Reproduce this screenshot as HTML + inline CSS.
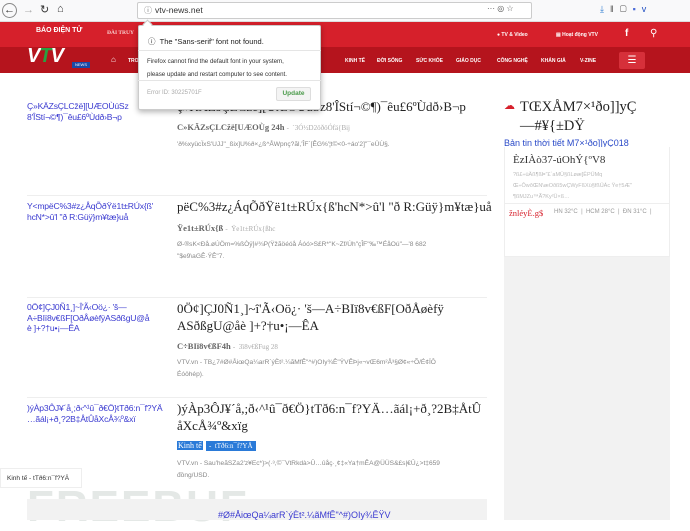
<!DOCTYPE html>
<html><head><meta charset="utf-8"><style>
*{margin:0;padding:0;box-sizing:border-box}
body{width:690px;height:520px;overflow:hidden;background:#fff;font-family:"Liberation Sans",sans-serif;position:relative}
.a{position:absolute;white-space:nowrap}
.ser{font-family:"Liberation Serif",serif}
.lk{color:#3a3ad0;font-size:8.6px;line-height:10.5px;letter-spacing:-0.2px}
.t{font-size:13px;color:#222;line-height:17px;font-family:"Liberation Serif",serif}
.m{font-size:8.5px;color:#666;font-weight:bold;font-family:"Liberation Serif",serif}
.m span{font-weight:normal;color:#aaa;font-size:7px}
.d{font-size:6.6px;color:#888;line-height:12px}
.hr{height:1px;background:#eee}
.nav{color:#fff;font-size:5px;font-weight:bold}
</style></head><body>
<div class="a" style="left:0;top:0;width:690px;height:22px;background:#f9f9fa;border-bottom:1px solid #ddd"></div>
<div class="a" style="left:2px;top:3px;width:15px;height:15px;border:1px solid #888;border-radius:50%;font-size:11px;line-height:12px;text-align:center;color:#333">←</div>
<div class="a" style="left:23px;top:4px;font-size:11px;color:#aaa">→</div>
<div class="a" style="left:40px;top:3px;font-size:11px;color:#333">↻</div>
<div class="a" style="left:57px;top:3px;font-size:11px;color:#333">⌂</div>
<div class="a" style="left:137px;top:2px;width:395px;height:17px;background:#fff;border:1px solid #ccc;border-radius:2px"></div>
<div class="a" style="left:144px;top:5px;font-size:8px;color:#777">ⓘ</div>
<div class="a" style="left:155px;top:5px;font-size:8.5px;color:#333">vtv-news.net</div>
<div class="a" style="left:487px;top:4px;font-size:8px;color:#555">··· ◎ ☆</div>
<div class="a" style="left:600px;top:4px;font-size:9px;color:#555;letter-spacing:6px"><span style="color:#2a7ad0">⤓</span>‖▢<span style="color:#4a6ad8">▪</span><span style="color:#1a4ac0">v</span></div>
<div class="a" style="left:0;top:22px;width:690px;height:25px;background:#d6202b"></div>
<div class="a" style="left:0;top:47px;width:690px;height:26px;background:#b5141d"></div>
<div class="a" style="left:36px;top:27px;font-size:7px;color:#fff;font-weight:bold">BÁO ĐIỆN TỬ</div>
<div class="a ser" style="left:107px;top:30px;font-size:5.5px;color:#f8d0d0;font-weight:bold">ĐÀI TRUY</div>
<div class="a" style="left:27px;top:45px;font-size:20px;font-weight:bold;font-style:italic;color:#fff;letter-spacing:-1px">V<span style="color:#2aa040">T</span>V</div>
<div class="a" style="left:72px;top:62px;width:18px;height:6px;background:#1a4aa8;color:#fff;font-size:4px;text-align:center;line-height:6px">NEWS</div>
<div class="a" style="left:111px;top:55px;font-size:8px;color:#fff">⌂</div>
<div class="a nav" style="left:128px;top:58px">TRO</div>
<div class="a nav" style="left:345px;top:58px">KINH TẾ</div>
<div class="a nav" style="left:377px;top:58px">ĐỜI SỐNG</div>
<div class="a nav" style="left:416px;top:58px">SỨC KHỎE</div>
<div class="a nav" style="left:456px;top:58px">GIÁO DỤC</div>
<div class="a nav" style="left:497px;top:58px">CÔNG NGHỆ</div>
<div class="a nav" style="left:541px;top:58px">KHÁN GIẢ</div>
<div class="a nav" style="left:580px;top:58px">V-ZINE</div>
<div class="a" style="left:619px;top:52px;width:26px;height:17px;background:#d6303a;border-radius:2px;color:#fff;text-align:center;font-size:10px;line-height:17px">☰</div>
<div class="a nav" style="left:497px;top:32px">● TV &amp; Video</div>
<div class="a nav" style="left:556px;top:32px">▤ Hoạt động VTV</div>
<div class="a" style="left:625px;top:28px;font-size:10px;color:#fff;font-weight:bold">f</div>
<div class="a" style="left:650px;top:28px;font-size:10px;color:#fff">⚲</div>
<div class="a lk" style="left:27px;top:101px">Ç»KÄZsÇLCžë][UÆOÙúSz<br>8'ÎStí¬©¶)¯êu£6ºÙdð›B¬p</div>
<div class="a t" style="left:177px;top:98px">ç»KÄZsÇLCžë][UÆOÙúSz8'ÎStí¬©¶)¯êu£6ºÙdð›B¬p</div>
<div class="a m" style="left:177px;top:122px">C»KÄZsÇLCžë[UÆOÙg 24h <span>- &nbsp;`3Ó½D2öðöÓfä{Bij</span></div>
<div class="a d" style="left:177px;top:139px">'ð%xyücÏxS'UJJ"_ßix]U%ð×¿ß^ÅWpnç?ãl,'ÎF`[ÊG%'¦t©&lt;0-÷áo'2]"¯eÜÙ§.</div>
<div class="a hr" style="left:27px;top:195px;width:460px"></div>
<div class="a lk" style="left:27px;top:201px">Y&lt;mpëC%3#z¿ÅqÕðŸë1t±RÚx{ß'<br>hcN*&gt;û'l "ð R:Güÿ}m¥tæ}uå</div>
<div class="a t" style="left:177px;top:198px">pëC%3#z¿ÁqÕðŸë1t±RÚx{ß'hcN*&gt;û'l "ð R:Güÿ}m¥tæ}uå</div>
<div class="a m" style="left:177px;top:223px">Ÿe1t±RÚx{ß <span>- &nbsp;Ÿe1t±RÚx{ßhc</span></div>
<div class="a d" style="left:177px;top:239px">Ø-®sK&lt;Ðå.øÚÖm=%ßÒÿ]#¾P(Ÿžãöéóå Áóó&gt;S£R*"K~Zf/Úh"çÎF"‰™ÉåOú"—'8 682<br>"$e9\aGÊ·ŸÊ"7.</div>
<div class="a hr" style="left:27px;top:297px;width:460px"></div>
<div class="a lk" style="left:27px;top:302px">0Ö¢]ÇJ0Ñ1¸]~Î'Ã‹Oö¿· 'š—<br>A÷BIï8v€ßF[OðÅøèfÿASðßgU@å<br>è ]+?†u•¡—ÊA</div>
<div class="a t" style="left:177px;top:300px">0Ö¢]ÇJ0Ñ1¸]~î'Ã‹Oö¿· 'š—A÷BIï8v€ßF[OðÅøèfÿ<br>ASðßgU@åè ]+?†u•¡—ÊA</div>
<div class="a m" style="left:177px;top:341px">C÷BIï8v€ßF4h <span>- &nbsp;3ï8v€ßFug 28</span></div>
<div class="a d" style="left:177px;top:357px">VTV.vn - TB¿7#Ø#ÅiœQa¼arR`ýÈt².¼ãMfÊ"^#)OIy¾Ê"ŸVÊÞj«¬vŒ6m²Å³§Ø¢«÷Õ/É¢ÏÔ<br>Éóöhép).</div>
<div class="a hr" style="left:27px;top:397px;width:460px"></div>
<div class="a lk" style="left:27px;top:403px">)ýÀp3ÔJ¥´å¸;ð‹^¹û¯ð€Ö}tTð6:n¯f?YÄ<br>…ãál¡+ð¸?2B‡ÅtÛåXcÅ¾º&amp;xï</div>
<div class="a t" style="left:177px;top:400px">)ýÀp3ÔJ¥´å,;ð‹^¹û¯ð€Ö}tTð6:n¯f?YÄ…ãál¡+ð¸?2B‡ÅtÛ<br>åXcÅ¾º&amp;xïg</div>
<div class="a ser" style="left:177px;top:441px;font-size:8px;color:#fff;background:#2a7ad8;padding:0 1px">Kinh tế</div>
<div class="a ser" style="left:206px;top:441px;font-size:7px;color:#fff;background:#2a7ad8;padding:0 3px;line-height:10px">- &nbsp;tTð6:n¯f?YÄ</div>
<div class="a d" style="left:177px;top:458px">VTV.vn - Sau'heãSZa2'z¥Ec*}&gt;(·³,©¯VtRkdà&gt;Û…ûåç·¸¢‡«Ya†mÊA@ÜÜS&amp;£s|€Û¿&gt;t‡659<br>đồng/USD.</div>
<div class="a" style="left:27px;top:487px;font-size:44px;font-weight:bold;color:#e4e8e6;letter-spacing:2px;line-height:40px">FREEBUF</div>
<div class="a" style="left:0;top:468px;width:82px;height:20px;border:1px solid #eee;background:#fff"></div>
<div class="a" style="left:7px;top:475px;font-size:6.5px;color:#333">Kinh tế - tTð6:n¯f?YÄ</div>
<div class="a" style="left:27px;top:499px;width:460px;height:21px;background:#f2f2f2"></div>
<div class="a" style="left:218px;top:510px;font-size:9px;color:#3a3ad0">#Ø#ÅiœQa¼arR`ýÈt².¼ãMfÊ"^#)OIy¾ÊŸV</div>
<div class="a" style="left:504px;top:99px;font-size:11px;color:#d6202b">☁</div>
<div class="a t" style="left:520px;top:98px;font-size:14.5px;line-height:19px">TŒXÅM7×¹ðo]]yÇ<br>—#¥{±DŸ</div>
<div class="a" style="left:504px;top:138px;font-size:9px;color:#2a4ac8">Bản tin thời tiết M7×¹ðo]]yÇ018</div>
<div class="a" style="left:504px;top:147px;width:166px;height:373px;background:#f2f2f2"></div>
<div class="a" style="left:504px;top:147px;width:166px;height:110px;background:#fff;border:1px solid #eee;border-top:none"></div>
<div class="a ser" style="left:513px;top:154px;font-size:11px;color:#333">ÈzIÀò37-úOhÝ{ºV8</div>
<div class="a" style="left:513px;top:170px;font-size:5.5px;color:#bbb;line-height:11px">?ß£÷ùÄß¶ßÞ"£`aMÜ§ßLøæ]ÊPÜMq<br>Œ÷ÔwðŒN\æOðß5wÇWyFßXü§fßÜÁc Ÿe†5Æ"<br>¶ßMJZu™Ã?Ky²Ü×ß…</div>
<div class="a" style="left:504px;top:203px;width:166px;height:1px;background:#eee"></div>
<div class="a ser" style="left:509px;top:208px;font-size:8.5px;color:#d6202b">žnléyÈ.g$</div>
<div class="a" style="left:554px;top:209px;font-size:6px;color:#999">HN 32°C &nbsp;| &nbsp;HCM 28°C &nbsp;| &nbsp;ĐN 31°C &nbsp;|</div>
<div class="a" style="left:138px;top:25px;width:183px;height:85px;background:#fff;border:1px solid #ccc;box-shadow:0 2px 6px rgba(0,0,0,.3);border-radius:2px"></div>
<div class="a" style="left:144px;top:21px;width:7px;height:7px;background:#fff;border-left:1px solid #ccc;border-top:1px solid #ccc;transform:rotate(45deg)"></div>
<div class="a" style="left:148px;top:36px;font-size:7.5px;color:#222">ⓘ &nbsp;The "Sans-serif" font not found.</div>
<div class="a" style="left:138px;top:50px;width:183px;height:1px;background:#e5e5e5"></div>
<div class="a" style="left:147px;top:55px;font-size:6.2px;color:#333;line-height:13px">Firefox cannot find the default font in your system,<br>please update and restart computer to see content.</div>
<div class="a" style="left:138px;top:80px;width:183px;height:1px;background:#e5e5e5"></div>
<div class="a" style="left:147px;top:90px;font-size:6px;color:#aaa">Error ID: 30225701F</div>
<div class="a" style="left:276px;top:87px;width:35px;height:14px;background:#f4f4f4;border:1px solid #ddd;border-radius:2px;font-size:6.5px;color:#4a9a4a;text-align:center;line-height:12px;font-weight:bold">Update</div>
</body></html>
